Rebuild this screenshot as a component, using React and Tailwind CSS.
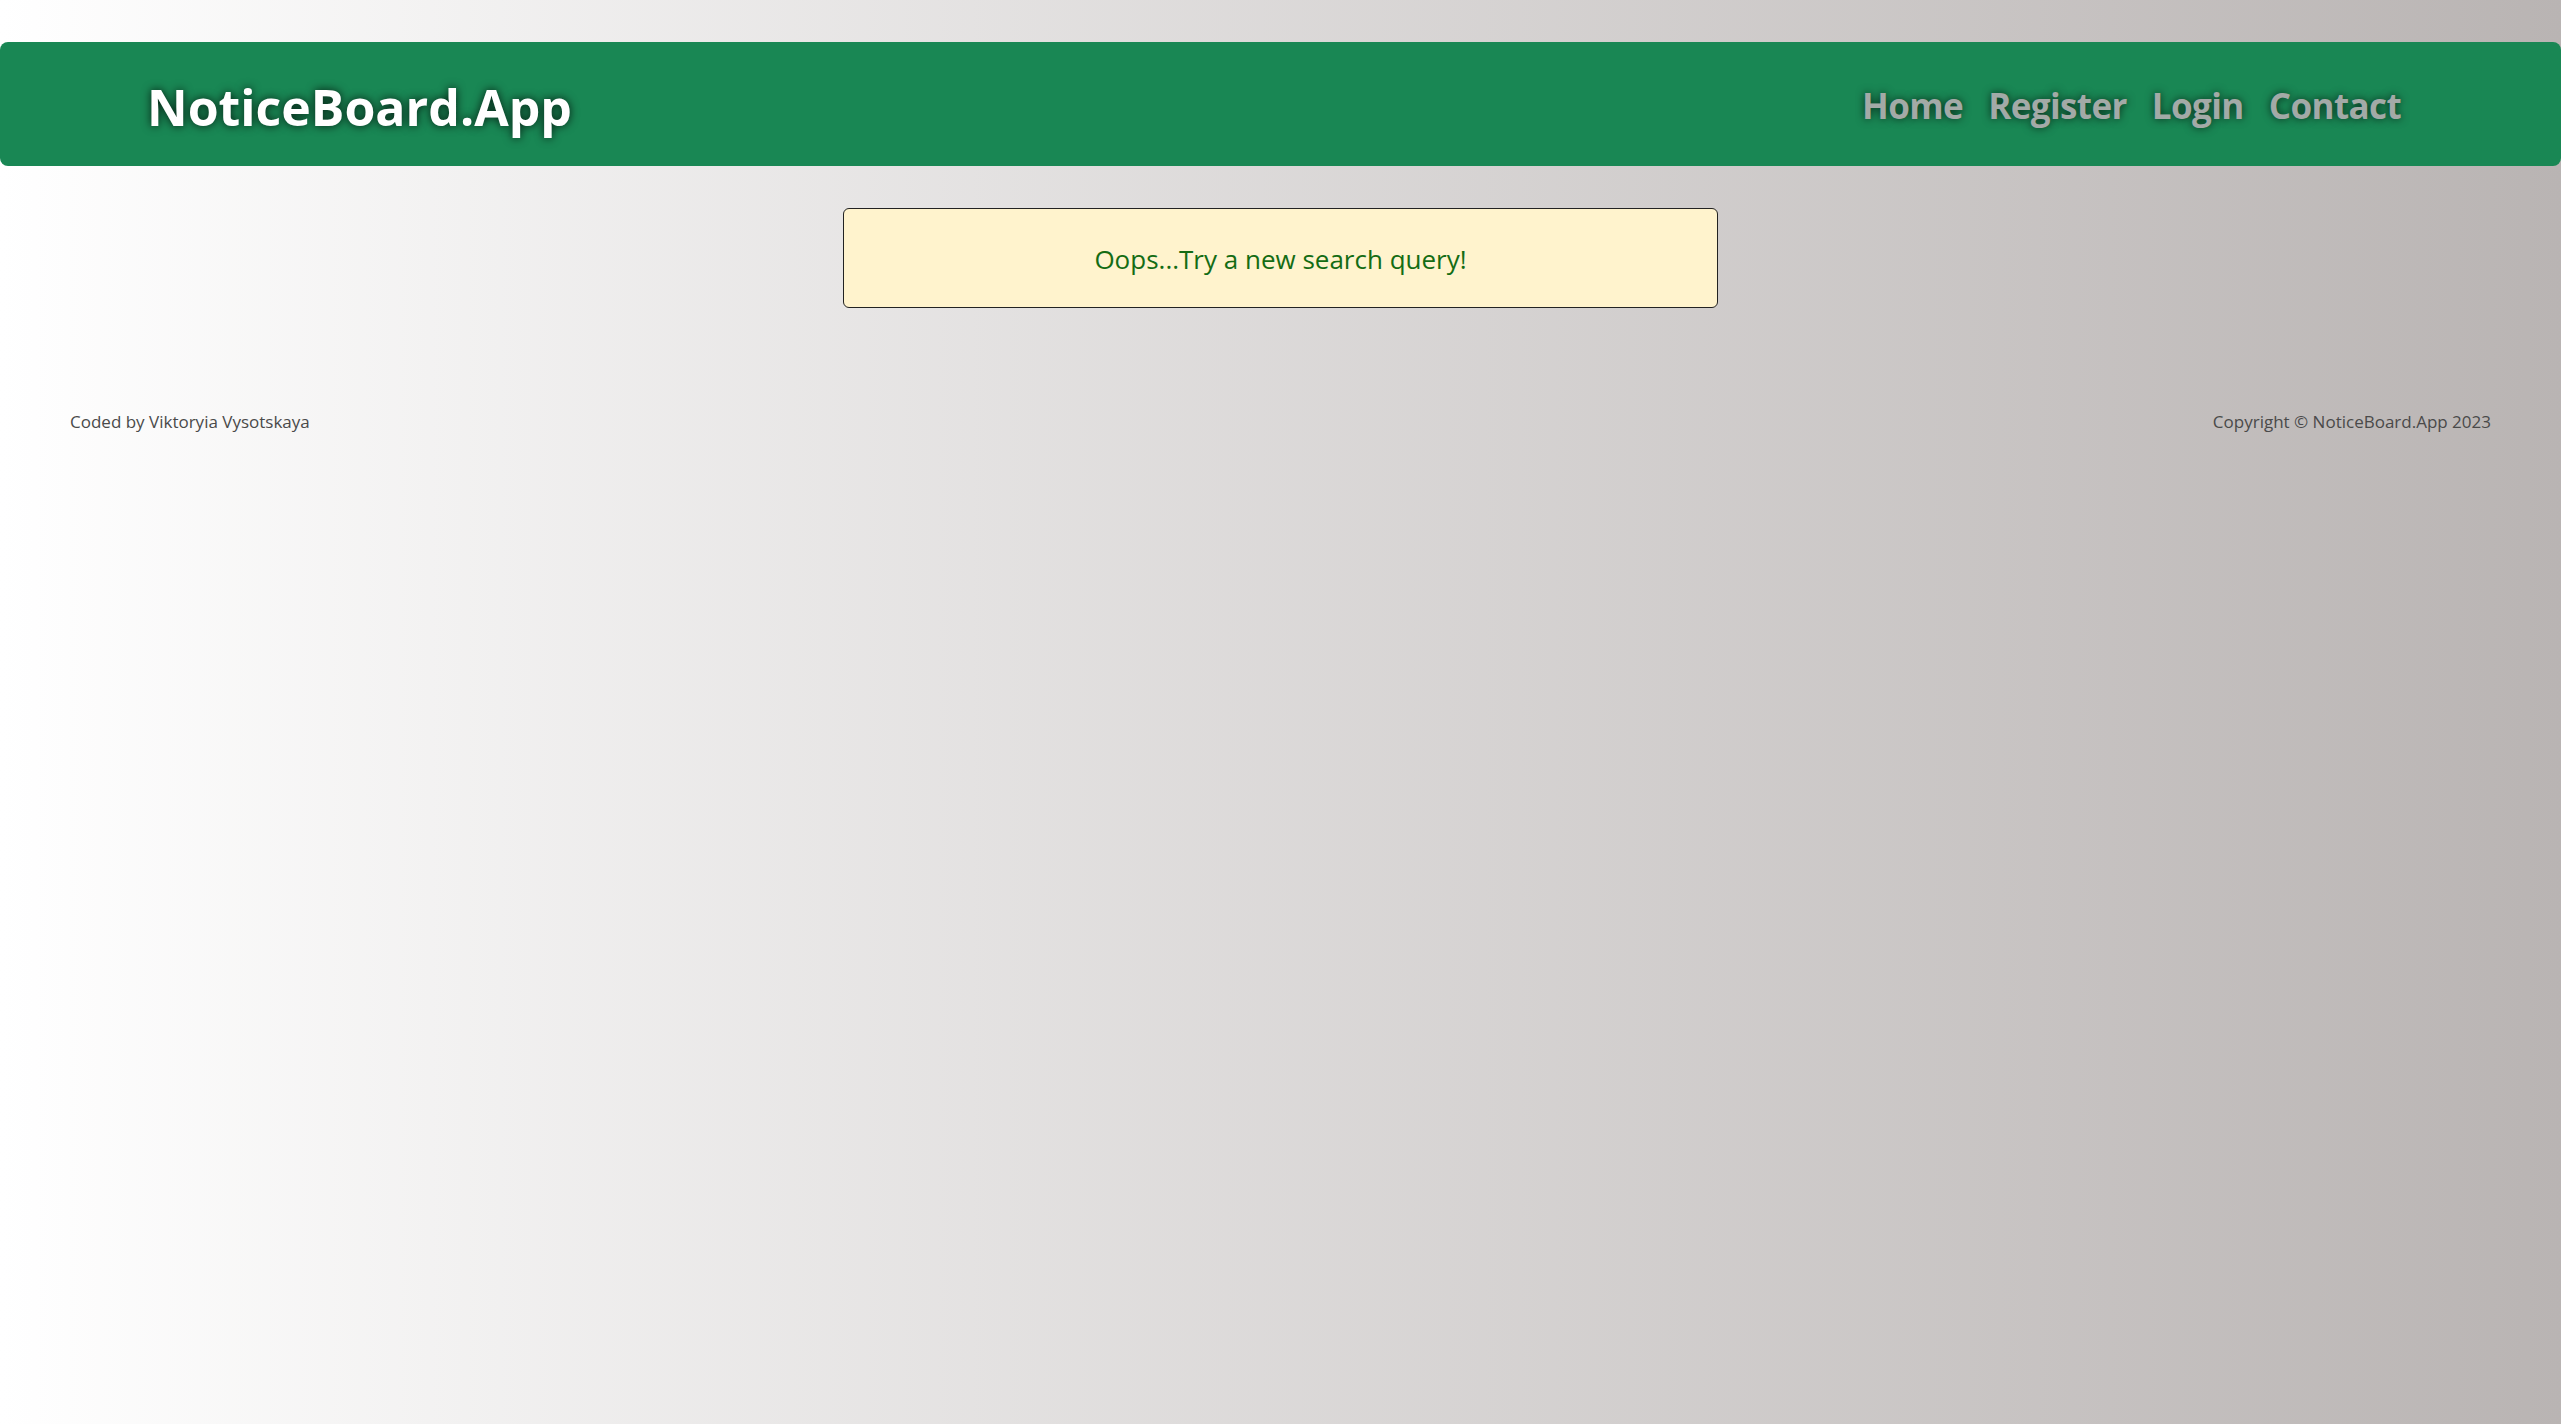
import React from 'react';

const navLinks = ['Home', 'Register', 'Login', 'Contact'];

const App = () => {
  return (
    <div
      className="min-h-screen w-full bg-linear-to-r from-[#ffffff] to-[#b9b4b3] pt-[42px]"
      style={{ fontFamily: '"Open Sans", "Noto Sans", sans-serif' }}
    >
      {/* Header */}
      <header className="h-[124px] bg-[#198754] rounded-[8px] flex items-center justify-between pl-[147px] pr-[160px]">
        <a
          href="#"
          className="pt-[6px] text-[50px] font-bold text-white [text-shadow:0_0_10px_rgba(0,0,0,0.8)]"
        >
          NoticeBoard.App
        </a>
        <nav className="flex items-center gap-[25px] pt-[5px]">
          {navLinks.map((link) => (
            <a
              key={link}
              href="#"
              className="text-[35px] font-bold text-[#a3aaa7] tracking-[-0.6px] [text-shadow:0_0_8px_rgba(0,0,0,0.7)]"
            >
              {link}
            </a>
          ))}
        </nav>
      </header>

      {/* Empty search result */}
      <div className="flex justify-center mt-[42px]">
        <div className="w-[875px] h-[100px] bg-[#fff3cd] border border-[#222] rounded-[6px] flex items-center justify-center">
          <p className="pt-[2px] text-[26px] text-[#146c14]">Oops...Try a new search query!</p>
        </div>
      </div>

      {/* Footer */}
      <footer className="flex justify-between items-center px-[70px] mt-[101px] text-[17px] text-[#4a4a4a]">
        <span>Coded by Viktoryia Vysotskaya</span>
        <span>Copyright © NoticeBoard.App 2023</span>
      </footer>
    </div>
  );
};

export default App;
